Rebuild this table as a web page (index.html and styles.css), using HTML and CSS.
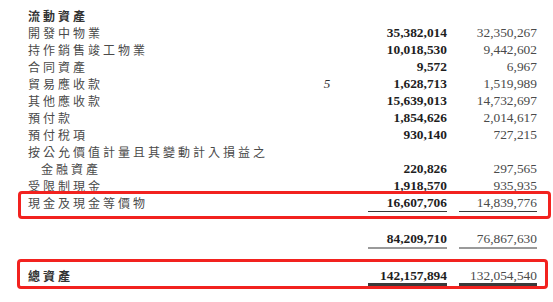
FILE: index.html
```html
<!DOCTYPE html>
<html lang="zh-Hant">
<head>
<meta charset="utf-8">
<link rel="stylesheet" href="styles.css">
</head>
<body>
<div class="sheet">
  <div class="row"><div class="label head">流動資產</div><div class="note"></div><div class="cur"></div><div class="prev"></div></div>
  <div class="row"><div class="label">開發中物業</div><div class="note"></div><div class="cur">35,382,014</div><div class="prev">32,350,267</div></div>
  <div class="row"><div class="label">持作銷售竣工物業</div><div class="note"></div><div class="cur">10,018,530</div><div class="prev">9,442,602</div></div>
  <div class="row"><div class="label">合同資產</div><div class="note"></div><div class="cur">9,572</div><div class="prev">6,967</div></div>
  <div class="row"><div class="label">貿易應收款</div><div class="note">5</div><div class="cur">1,628,713</div><div class="prev">1,519,989</div></div>
  <div class="row"><div class="label">其他應收款</div><div class="note"></div><div class="cur">15,639,013</div><div class="prev">14,732,697</div></div>
  <div class="row"><div class="label">預付款</div><div class="note"></div><div class="cur">1,854,626</div><div class="prev">2,014,617</div></div>
  <div class="row"><div class="label">預付稅項</div><div class="note"></div><div class="cur">930,140</div><div class="prev">727,215</div></div>
  <div class="row"><div class="label">按公允價值計量且其變動計入損益之</div><div class="note"></div><div class="cur"></div><div class="prev"></div></div>
  <div class="row"><div class="label indent">金融資產</div><div class="note"></div><div class="cur">220,826</div><div class="prev">297,565</div></div>
  <div class="row"><div class="label">受限制現金</div><div class="note"></div><div class="cur">1,918,570</div><div class="prev">935,935</div></div>
  <div class="row boxed box-cash"><div class="label">現金及現金等價物</div><div class="note"></div><div class="cur rule-dark">16,607,706</div><div class="prev rule-dark">14,839,776</div></div>
  <div class="row subtotal"><div class="label"></div><div class="note"></div><div class="cur rule-gray">84,209,710</div><div class="prev rule-gray">76,867,630</div></div>
  <div class="row boxed box-total total"><div class="label head">總資產</div><div class="note"></div><div class="cur rule-double">142,157,894</div><div class="prev rule-double">132,054,540</div></div>
</div>
</body>
</html>
```
FILE: styles.css
```css
html, body {
  margin: 0;
  padding: 0;
  background: #ffffff;
  overflow: hidden;
}

.sheet {
  padding: 7px 16px 12px 28px;
}

.row {
  display: grid;
  grid-template-columns: 1fr 50px 79px 90px;
  height: 17px;
  align-items: start;
}

.label {
  font-family: "Noto Sans CJK TC", "Noto Sans CJK SC", sans-serif;
  font-size: 12px;
  line-height: 17px;
  letter-spacing: 3px;
  color: #4a4a4a;
  white-space: nowrap;
}

.label.head {
  font-weight: 700;
  color: #333;
}

.label.indent {
  padding-left: 13px;
}

.note {
  font-family: "Liberation Serif", serif;
  font-style: italic;
  font-size: 13px;
  line-height: 17px;
  color: #333;
  text-align: center;
  padding-right: 32px;
}

.cur, .prev {
  font-family: "Liberation Serif", serif;
  font-size: 13.4px;
  line-height: 17px;
  text-align: right;
  height: 17px;
}

.cur {
  font-weight: 700;
  color: #1e1e1e;
}

.prev {
  margin-left: 12px;
  color: #4a4a4a;
}

.rule-dark {
  border-bottom: 1.5px solid #3a3a3a;
}

.rule-gray {
  height: 17px;
  border-bottom: 2px solid #9a9a9a;
}

.rule-double {
  height: 16px;
  border-bottom: 3px solid #3a3a3a;
}

.subtotal {
  margin-top: 19px;
}

.total {
  margin-top: 20px;
}

.boxed {
  position: relative;
}

.boxed::before {
  content: "";
  position: absolute;
  border: 3px solid #f2221f;
  border-radius: 4px;
  pointer-events: none;
}

.box-cash::before {
  left: -10px;
  right: -14px;
  top: -3px;
  bottom: -8px;
}

.box-total::before {
  left: -11px;
  right: -11px;
  top: -8px;
  bottom: -5px;
}
```
